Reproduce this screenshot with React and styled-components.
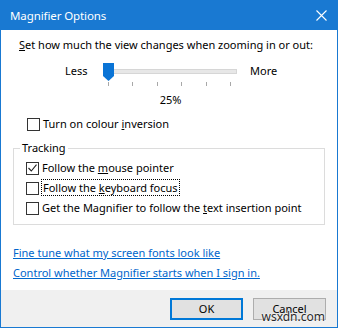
import React from "react";
import styled, { createGlobalStyle } from "styled-components";

const Global = createGlobalStyle`
  html, body { margin: 0; padding: 0; background: #fff; }
  body { font-family: "Noto Sans", "Open Sans", sans-serif; font-size: 11px; color: #000; }
`;

const Window = styled.div`
  position: relative;
  width: 338px;
  height: 328px;
  box-sizing: border-box;
  border: 1px solid #1979d2;
  border-top: none;
  background: #fff;
  display: flex;
  flex-direction: column;
  overflow: hidden;
`;

const TitleBar = styled.div`
  height: 30px;
  margin: 0 -1px;
  background: #1979d2;
  color: #fff;
  display: flex;
  align-items: center;
  justify-content: space-between;
  padding: 0 10px 0 10px;
  font-size: 11.5px;
  letter-spacing: -0.1px;
  flex-shrink: 0;
`;

const Close = styled.svg`
  width: 11px;
  height: 11px;
  margin-right: 1px;
`;

const Body = styled.div`
  flex: 1;
  padding: 8px 12px 0 12px;
  display: flex;
  flex-direction: column;
`;

const Prompt = styled.div`
  line-height: 14px;
  padding-left: 6px;
  white-space: nowrap;
`;

const Key = styled.span`
  text-decoration: underline;
`;

const SliderRow = styled.div`
  display: flex;
  align-items: flex-start;
  margin-top: 9px;
  padding-left: 52px;
  height: 26px;
`;

const SliderLabel = styled.span`
  line-height: 20px;
  width: ${(p) => (p.$w ? `${p.$w}px` : "auto")};
`;

const Slider = styled.div`
  position: relative;
  width: 135px;
  height: 26px;
  margin: 0 13px 0 0;
`;

const Track = styled.div`
  position: absolute;
  left: 3px;
  right: 0;
  top: 8px;
  height: 3px;
  background: #e7e7e7;
  border: 1px solid #d6d6d6;
  border-left: none;
`;

const Thumb = styled.svg`
  position: absolute;
  left: 1px;
  top: 2px;
  width: 11px;
  height: 18px;
`;

const Ticks = styled.div`
  position: absolute;
  left: 6px;
  right: 6px;
  top: 21px;
  display: flex;
  justify-content: space-between;
`;

const Tick = styled.span`
  width: 1px;
  height: 4px;
  background: #a8a8a8;
`;

const Percent = styled.div`
  line-height: 14px;
  margin-top: 6px;
  text-align: center;
  padding-left: 3px;
`;

const CheckRow = styled.label`
  display: flex;
  align-items: center;
  height: 20px;
  margin-top: ${(p) => p.$mt || 0}px;
  padding-left: ${(p) => p.$indent || 0}px;
  line-height: 14px;
  white-space: nowrap;
`;

const Box = styled.span`
  width: 11px;
  height: 11px;
  border: 1px solid #333;
  background: #fff;
  margin-right: 3px;
  display: flex;
  align-items: center;
  justify-content: center;
  flex-shrink: 0;
`;

const Focus = styled.span`
  outline: 1px dotted #000;
  outline-offset: 0;
  padding: 0 1px;
`;

const Group = styled.fieldset`
  margin: 7px 0 0 0;
  padding: 3px 0 6px 0;
  border: 1px solid #dcdcdc;
  min-width: 0;
`;

const Legend = styled.legend`
  padding: 0 2px;
  margin-left: 6px;
  line-height: 14px;
`;

const Links = styled.div`
  display: flex;
  flex-direction: column;
  align-items: flex-start;
  gap: 6px;
  margin-top: 21px;
`;

const Link = styled.a`
  color: #0066cc;
  text-decoration: underline;
  line-height: 14px;
  cursor: pointer;
`;

const Footer = styled.div`
  height: 37px;
  background: #f0f0f0;
  display: flex;
  justify-content: flex-end;
  align-items: flex-start;
  gap: 10px;
  padding: 8px 11px 0 0;
  box-sizing: border-box;
  flex-shrink: 0;
`;

const Button = styled.button`
  width: 73px;
  height: 22px;
  box-sizing: border-box;
  background: #e1e1e1;
  border: ${(p) => (p.$primary ? "2px solid #0078d7" : "1px solid #adadad")};
  font-family: inherit;
  font-size: 11px;
  color: #000;
  padding: 0;
  line-height: 16px;
`;

const Watermark = styled.span`
  position: absolute;
  right: 12px;
  bottom: 2px;
  font-size: 12px;
  color: #2a2a2a;
  text-shadow: 0 0 2px #fff, 0 0 2px #fff;
  pointer-events: none;
`;

const Check = ({ checked, children, indent, mt }) => (
  <CheckRow $indent={indent} $mt={mt}>
    <Box>
      {checked && (
        <svg width="9" height="8" viewBox="0 0 9 8">
          <path d="M0.5 4 L3.3 7 L8.5 0.7" fill="none" stroke="#222" strokeWidth="1.1" />
        </svg>
      )}
    </Box>
    <span>{children}</span>
  </CheckRow>
);

export default function App() {
  return (
    <>
      <Global />
      <Window>
        <TitleBar>
          <span>Magnifier Options</span>
          <Close viewBox="0 0 11 11">
            <path d="M0.5 0.5 L10.5 10.5 M10.5 0.5 L0.5 10.5" stroke="#fff" strokeWidth="1.1" />
          </Close>
        </TitleBar>
        <Body>
          <Prompt>
            <Key>S</Key>et how much the view changes when zooming in or out:
          </Prompt>
          <SliderRow>
            <SliderLabel $w={37}>Less</SliderLabel>
            <Slider>
              <Track />
              <Ticks>
                {[0, 1, 2, 3, 4, 5].map((i) => (
                  <Tick key={i} />
                ))}
              </Ticks>
              <Thumb viewBox="0 0 11 18">
                <path d="M0 0 H11 V13 L5.5 18 L0 13 Z" fill="#0a74d6" />
              </Thumb>
            </Slider>
            <SliderLabel>More</SliderLabel>
          </SliderRow>
          <Percent>25%</Percent>
          <Check indent={14} mt={7}>
            Turn on colour <Key>i</Key>nversion
          </Check>
          <Group>
            <Legend>Tracking</Legend>
            <Check indent={12} checked>
              Follow the <Key>m</Key>ouse pointer
            </Check>
            <Check indent={12}>
              <Focus>
                Follow the <Key>k</Key>eyboard focus
              </Focus>
            </Check>
            <Check indent={12}>
              Get the Magnifier to follow the <Key>t</Key>ext insertion point
            </Check>
          </Group>
          <Links>
            <Link>Fine tune what my screen fonts look like</Link>
            <Link>Control whether Magnifier starts when I sign in.</Link>
          </Links>
        </Body>
        <Footer>
          <Button $primary>OK</Button>
          <Button>Cancel</Button>
        </Footer>
        <Watermark>wsxdn.com</Watermark>
      </Window>
    </>
  );
}
